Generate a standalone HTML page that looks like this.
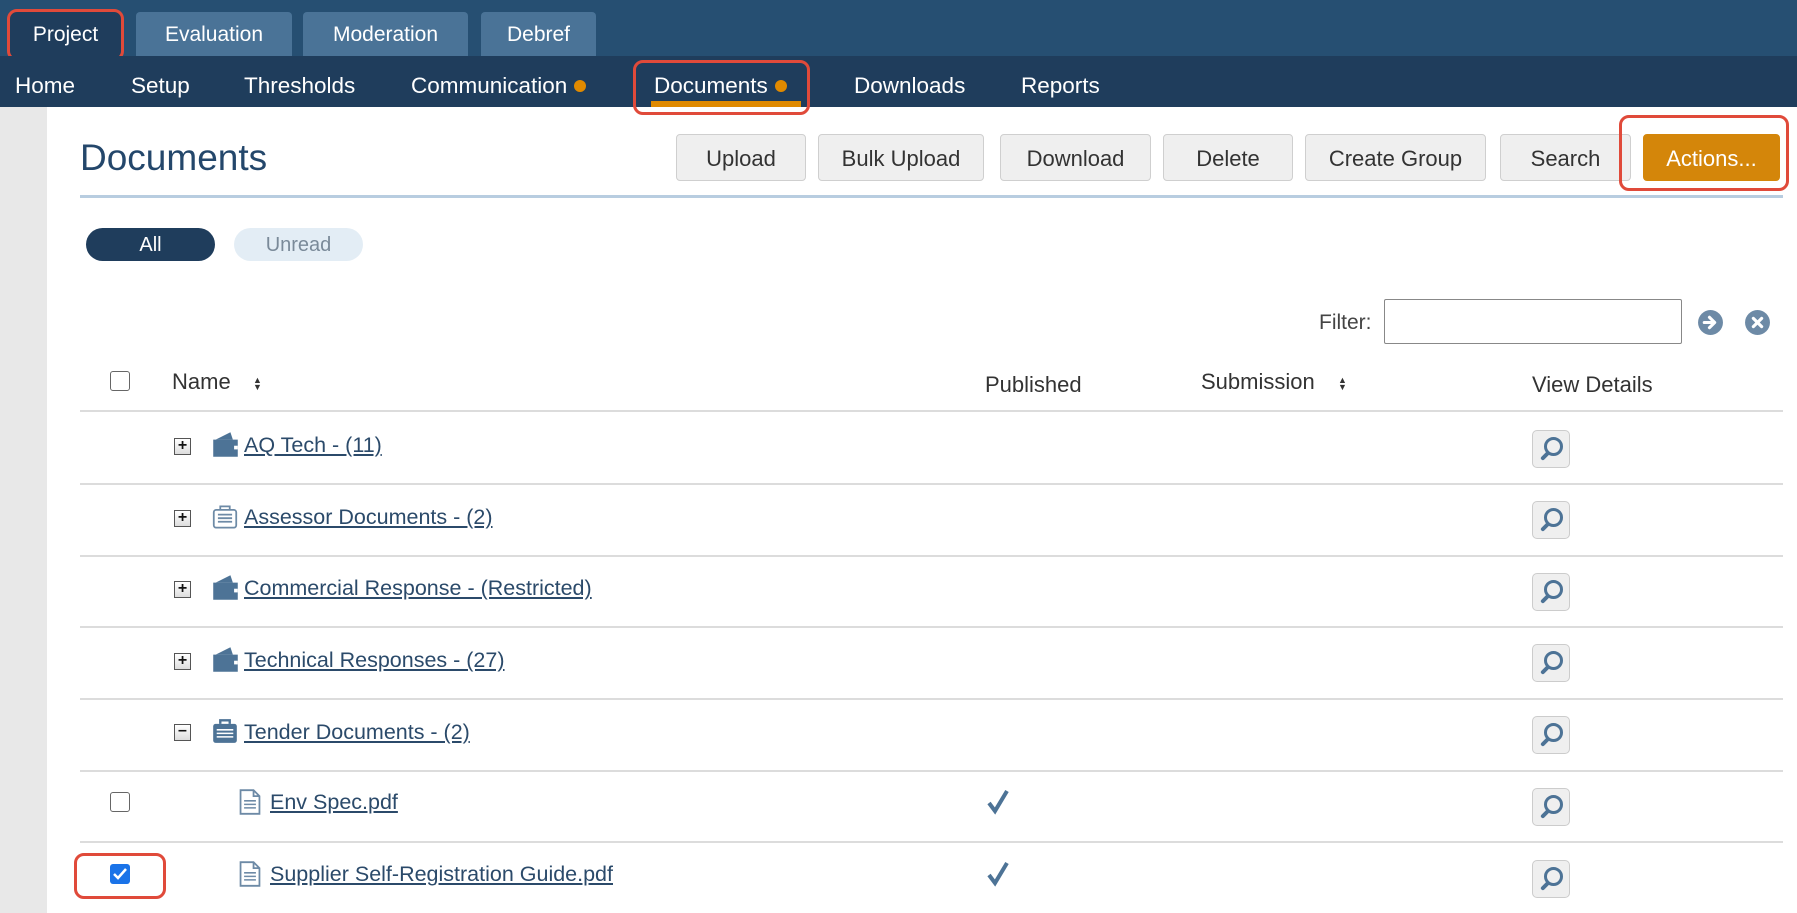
<!DOCTYPE html>
<html><head><meta charset="utf-8"><style>
*{box-sizing:border-box;margin:0;padding:0}
body{width:1797px;height:913px;overflow:hidden;background:#fff;font-family:"Liberation Sans",sans-serif;position:relative}
.abs{position:absolute}
.top{left:0;top:0;width:1797px;height:56px;background:#264f72}
.tab{top:12px;height:44px;background:#4a7397;color:#fff;font-size:21px;display:flex;align-items:center;justify-content:center;border-radius:4px 4px 0 0;padding-top:2px}
.nav{left:0;top:56px;width:1797px;height:51px;background:#1f3d5c}
.ni{top:62px;height:51px;line-height:48px;color:#fff;font-size:22.5px}
.dot{display:inline-block;width:12px;height:12px;border-radius:50%;background:#e08a00;margin-left:7px;vertical-align:1px}
.red{border:3px solid #e04a3a;border-radius:10px}
.side{left:0;top:107px;width:47px;height:806px;background:#e8e8e8}
.btn{top:134px;height:47px;background:#efefef;border:1.5px solid #cfcfcf;border-radius:4px;color:#333;font-size:22px;display:flex;align-items:center;justify-content:center;padding-top:3px}
.hl{height:2px;background:#dcdcdc;left:80px;width:1703px}
.lnk{color:#2b4a6a;text-decoration:underline;font-size:21.5px}
.pb{width:17px;height:17px;border:1.5px solid #555;background:linear-gradient(#fff,#ddd);font-size:16px;line-height:13px;text-align:center;color:#111;font-weight:bold}
.mag{left:1532px;width:38px;height:38px;border:1.5px solid #ccc;border-radius:5px;background:#efefef}
.cb{width:20px;height:20px;border:1.5px solid #666;border-radius:3px;background:#fff}
.th{font-size:22px;color:#333}
</style></head><body>
<div class="abs top"></div>
<div class="abs tab" style="left:10px;width:111px;background:#1f3d5c">Project</div>
<div class="abs tab" style="left:136px;width:156px">Evaluation</div>
<div class="abs tab" style="left:303px;width:165px">Moderation</div>
<div class="abs tab" style="left:481px;width:115px">Debref</div>
<div class="abs red" style="left:7px;top:9px;width:117px;height:52px"></div>
<div class="abs nav"></div>
<div class="abs ni" style="left:15px">Home</div>
<div class="abs ni" style="left:131px">Setup</div>
<div class="abs ni" style="left:244px">Thresholds</div>
<div class="abs ni" style="left:411px">Communication<span class="dot"></span></div>
<div class="abs ni" style="left:654px">Documents<span class="dot"></span></div>
<div class="abs" style="left:651px;top:101px;width:150px;height:6px;background:#e08a00"></div>
<div class="abs ni" style="left:854px">Downloads</div>
<div class="abs ni" style="left:1021px">Reports</div>
<div class="abs red" style="left:633px;top:60px;width:177px;height:55px"></div>
<div class="abs side"></div>
<div class="abs" style="left:80px;top:137px;font-size:37px;color:#24476b">Documents</div>
<div class="abs btn" style="left:676px;width:130px">Upload</div>
<div class="abs btn" style="left:818px;width:166px">Bulk Upload</div>
<div class="abs btn" style="left:1000px;width:151px">Download</div>
<div class="abs btn" style="left:1163px;width:130px">Delete</div>
<div class="abs btn" style="left:1305px;width:181px">Create Group</div>
<div class="abs btn" style="left:1500px;width:131px">Search</div>
<div class="abs btn" style="left:1643px;width:137px;background:#d4860a;border-color:#d4860a;color:#fff">Actions...</div>
<div class="abs red" style="left:1619px;top:115px;width:170px;height:76px"></div>
<div class="abs" style="left:80px;top:195px;width:1703px;height:3px;background:#b8cde0"></div>
<div class="abs" style="left:86px;top:228px;width:129px;height:33px;border-radius:17px;background:#1f3d5c;color:#fff;font-size:20px;text-align:center;line-height:35px">All</div>
<div class="abs" style="left:234px;top:228px;width:129px;height:33px;border-radius:17px;background:#e3edf5;color:#7a8a99;font-size:20px;text-align:center;line-height:35px">Unread</div>
<div class="abs" style="left:1319px;top:311px;font-size:21px;color:#444">Filter:</div>
<div class="abs" style="left:1384px;top:299px;width:298px;height:45px;border:1.5px solid #888;border-radius:2px"></div>
<svg class="abs" style="left:1697px;top:309px" width="27" height="27" viewBox="0 0 26 26"><circle cx="13" cy="13" r="12" fill="#6d8aa6"/><path d="M7 13h10M12 8l5 5-5 5" stroke="#fff" stroke-width="3" fill="none" stroke-linecap="round" stroke-linejoin="round"/></svg>
<svg class="abs" style="left:1744px;top:309px" width="27" height="27" viewBox="0 0 26 26"><circle cx="13" cy="13" r="12" fill="#6d8aa6"/><path d="M9 9l8 8M17 9l-8 8" stroke="#fff" stroke-width="3" stroke-linecap="round"/></svg>
<div class="abs cb" style="left:110px;top:371px"></div>
<div class="abs th" style="left:172px;top:369px">Name</div>
<div class="abs" style="left:253px;top:377px;font-size:9px;color:#333;line-height:7px">▲<br>▼</div>
<div class="abs th" style="left:985px;top:372px">Published</div>
<div class="abs th" style="left:1201px;top:369px">Submission</div>
<div class="abs" style="left:1338px;top:377px;font-size:9px;color:#333;line-height:7px">▲<br>▼</div>
<div class="abs th" style="left:1532px;top:372px">View Details</div>
<div class="abs hl" style="top:410px"></div>
<div class="abs hl" style="top:483px"></div>
<div class="abs hl" style="top:555px"></div>
<div class="abs hl" style="top:626px"></div>
<div class="abs hl" style="top:698px"></div>
<div class="abs hl" style="top:770px"></div>
<div class="abs hl" style="top:841px"></div>

<div class="abs pb" style="left:174px;top:438px">+</div>
<svg class="abs" style="left:212px;top:431px" width="27" height="27" viewBox="0 0 22 22"><path d="M1 7h20v14H1z" fill="#4d7396"/><path d="M3 7l12-6 2 6z" fill="#4d7396"/><rect x="18" y="12" width="3" height="3" fill="#fff"/></svg>
<div class="abs lnk" style="left:244px;top:433px">AQ Tech - (11)</div>
<div class="abs mag" style="top:430px"></div>

<div class="abs pb" style="left:174px;top:510px">+</div>
<svg class="abs" style="left:212px;top:504px" width="26" height="26" viewBox="0 0 22 22"><rect x="1.5" y="5" width="19" height="15" rx="2" fill="none" stroke="#6d8aa6" stroke-width="1.5"/><path d="M7 5V2h8v3M5 9h12M5 12h12M5 15h12" stroke="#6d8aa6" stroke-width="1.5" fill="none"/></svg>
<div class="abs lnk" style="left:244px;top:505px">Assessor Documents - (2)</div>
<div class="abs mag" style="top:501px"></div>

<div class="abs pb" style="left:174px;top:581px">+</div>
<svg class="abs" style="left:212px;top:574px" width="27" height="27" viewBox="0 0 22 22"><path d="M1 7h20v14H1z" fill="#4d7396"/><path d="M3 7l12-6 2 6z" fill="#4d7396"/><rect x="18" y="12" width="3" height="3" fill="#fff"/></svg>
<div class="abs lnk" style="left:244px;top:576px">Commercial Response - (Restricted)</div>
<div class="abs mag" style="top:573px"></div>

<div class="abs pb" style="left:174px;top:653px">+</div>
<svg class="abs" style="left:212px;top:646px" width="27" height="27" viewBox="0 0 22 22"><path d="M1 7h20v14H1z" fill="#4d7396"/><path d="M3 7l12-6 2 6z" fill="#4d7396"/><rect x="18" y="12" width="3" height="3" fill="#fff"/></svg>
<div class="abs lnk" style="left:244px;top:648px">Technical Responses - (27)</div>
<div class="abs mag" style="top:644px"></div>

<div class="abs pb" style="left:174px;top:724px;line-height:12px">–</div>
<svg class="abs" style="left:212px;top:718px" width="26" height="26" viewBox="0 0 22 22"><rect x="1" y="5" width="20" height="16" rx="2" fill="#4d7396"/><path d="M7 5V2h8v3" stroke="#4d7396" stroke-width="2" fill="none"/><path d="M4 10h14M4 13h14M4 16h14" stroke="#fff" stroke-width="1.3"/></svg>
<div class="abs lnk" style="left:244px;top:720px">Tender Documents - (2)</div>
<div class="abs mag" style="top:716px"></div>

<div class="abs cb" style="left:110px;top:792px"></div>
<svg class="abs" style="left:238px;top:789px" width="24" height="26" viewBox="0 0 20 22"><path d="M2 1h11l5 5v15H2z M13 1v5h5" fill="none" stroke="#6d8aa6" stroke-width="1.5"/><path d="M5 10h10M5 13h10M5 16h10" stroke="#6d8aa6" stroke-width="1.3"/></svg>
<div class="abs lnk" style="left:270px;top:790px">Env Spec.pdf</div>
<svg class="abs" style="left:986px;top:789px" width="24" height="26" viewBox="0 0 24 26"><path d="M3 14l6 8L21 2" stroke="#4d7396" stroke-width="4" fill="none"/></svg>
<div class="abs mag" style="top:788px"></div>

<div class="abs" style="left:110px;top:864px;width:20px;height:20px;border-radius:3px;background:#1a73e8"></div>
<svg class="abs" style="left:110px;top:864px" width="20" height="20" viewBox="0 0 20 20"><path d="M4 10l4 4 8-9" stroke="#fff" stroke-width="2.5" fill="none"/></svg>
<div class="abs red" style="left:74px;top:853px;width:92px;height:46px"></div>
<svg class="abs" style="left:238px;top:861px" width="24" height="26" viewBox="0 0 20 22"><path d="M2 1h11l5 5v15H2z M13 1v5h5" fill="none" stroke="#6d8aa6" stroke-width="1.5"/><path d="M5 10h10M5 13h10M5 16h10" stroke="#6d8aa6" stroke-width="1.3"/></svg>
<div class="abs lnk" style="left:270px;top:862px">Supplier Self-Registration Guide.pdf</div>
<svg class="abs" style="left:986px;top:861px" width="24" height="26" viewBox="0 0 24 26"><path d="M3 14l6 8L21 2" stroke="#4d7396" stroke-width="4" fill="none"/></svg>
<div class="abs mag" style="top:860px"></div>

<style>.mag::after{content:"";position:absolute;left:11px;top:6px;width:13px;height:13px;border:3px solid #4d7396;border-radius:50%}
.mag::before{content:"";position:absolute;left:7px;top:23px;width:10px;height:4px;background:#4d7396;transform:rotate(-45deg);border-radius:2px}</style>
</body></html>
